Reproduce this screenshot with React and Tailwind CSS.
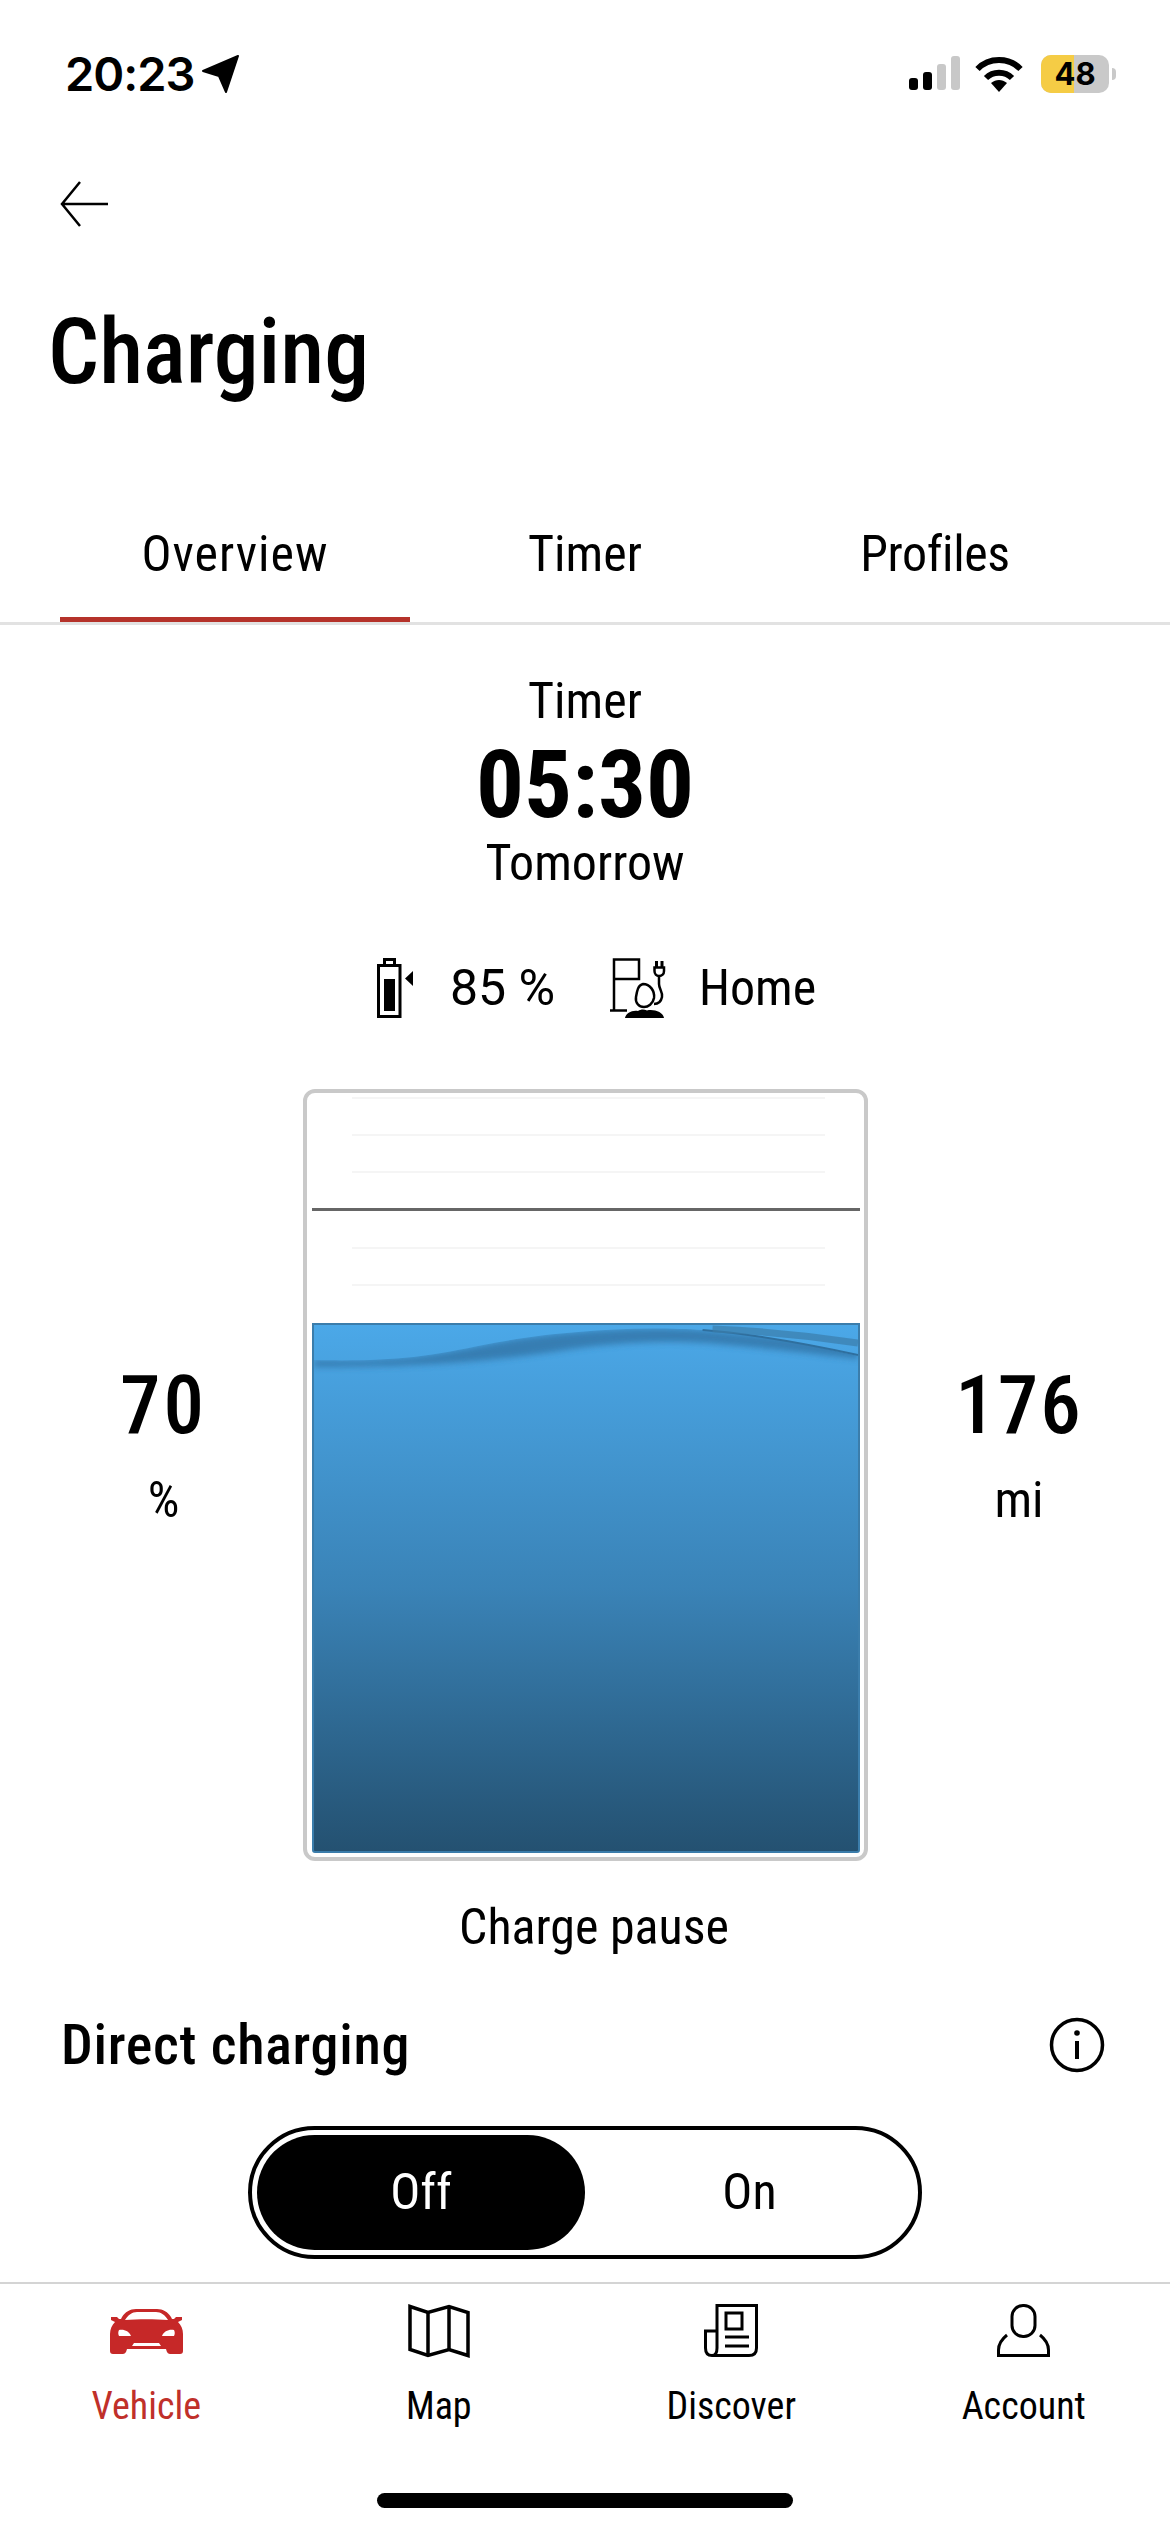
import { useId } from "react";

const font = "font-['Roboto',sans-serif] font-stretch-[75%]";

function Signal() {
    return (
        <svg width="52" height="36" viewBox="0 0 52 36">
            <rect x="0" y="22" width="9" height="12" rx="3" fill="#000" />
            <rect x="14" y="16" width="9" height="18" rx="3" fill="#000" />
            <rect x="28" y="8" width="9" height="26" rx="3" fill="#c8c8c8" />
            <rect x="42" y="0" width="9" height="34" rx="3" fill="#c8c8c8" />
        </svg>
    );
}

function Wifi() {
    return (
        <svg width="48" height="38" viewBox="0 0 48 38" fill="none" stroke="#000" strokeWidth="6">
            <path d="M2.5 14 C14 2 34 2 45.5 14" />
            <path d="M11 23 C18 16 30 16 37 23" />
            <path d="M16 28 L24 37 L32 28 C27 24 21 24 16 28 Z" fill="#000" stroke="none" />
        </svg>
    );
}

function BatteryStatus() {
    return (
        <div className="ml-[4px] flex items-center gap-[3px]">
            <div className="relative w-[68px] h-[38px] rounded-[10px] overflow-hidden bg-[#c9c9c9]">
                <div className="h-full w-[48%] bg-[#f5cc45]" />
                <span className="absolute inset-0 flex items-center justify-center text-[31px] font-bold text-black">48</span>
            </div>
            <div className="w-[4px] h-[12px] rounded-r-full bg-[#c9c9c9]" />
        </div>
    );
}

function ChargeTargetIcon() {
    return (
        <svg width="37" height="60" viewBox="0 0 37 60" fill="none" stroke="#000" strokeWidth="3">
            <rect x="7.5" y="1.5" width="10" height="6" />
            <rect x="1.5" y="7.5" width="21.5" height="51" />
            <rect x="7" y="21" width="11" height="32" fill="#000" stroke="none" />
            <path d="M36 13 L28 20.5 L36 28 Z" fill="#000" stroke="none" />
        </svg>
    );
}

function HomeChargerIcon() {
    return (
        <svg width="58" height="60" viewBox="0 0 58 60" fill="none" stroke="#000" strokeWidth="2.5">
            <path d="M4 53 V1.5 H29 V21 H4" />
            <path d="M0 52.5 H17" />
            <path d="M15 60 C16 55 22 52 28 53 C31 51 34 51 37 52.5 C44 51 53 54 54 60 Z" fill="#000" stroke="none" />
            <path d="M33 26 C40 26 45 33 44 40 C43 46 38 49 34 49 C29 49 25 45 26 39 C27 33 28 27 33 26 Z" />
            <path d="M49 18 V26 C49 31 53 34 52 39 C51 44 48 46 44 46" />
            <path d="M44.5 9.5 H54 V13 C54 16 52 18 49 18 C46.5 18 44.5 16 44.5 13 Z" />
            <path d="M46.5 3 V9 M52 3 V9" strokeWidth="3" />
        </svg>
    );
}

function CarIcon() {
    return (
        <svg width="73" height="45" viewBox="0 0 73 45">
            <path
                fill="#c62828"
                fillRule="evenodd"
                d="M12 8 C15 3 20 0 26 0 H47 C53 0 58 3 61 8 L62 10 H64 L66 8 H72 V11 L68 13 C71 16 73 20 73 25 V42 C73 44 72 45 70 45 H61 C58 45 57 44 56 40 H17 C16 44 15 45 12 45 H3 C1 45 0 44 0 42 V25 C0 20 2 16 5 13 L1 11 V8 H7 L9 10 H11 Z M15 11 C18 6 22 3 27 3 H46 C51 3 55 6 58 11 C45 10 28 10 15 11 Z M9 21 C14 20 19 22 21 27 H9 C8 25 8 23 9 21 Z M64 21 C59 20 54 22 52 27 H64 C65 25 65 23 64 21 Z M24 34 H49 L51 37 H22 Z"
            />
        </svg>
    );
}

function MapIcon() {
    return (
        <svg width="62" height="54" viewBox="0 0 62 54" fill="none" stroke="#000" strokeWidth="3.5">
            <path d="M2 2.5 L20 8.5 L41 2.5 L60 8.5 V51.5 L41 45.5 L20 51.5 L2 45.5 Z" />
            <path d="M20 8.5 V51.5 M41 2.5 V45.5" />
        </svg>
    );
}

function NewsIcon() {
    return (
        <svg width="54" height="54" viewBox="0 0 54 54" fill="none" stroke="#000" strokeWidth="3">
            <path d="M13 42 V1.5 H52.5 V44 C52.5 49 50 51.5 45 51.5 H8 C4 51.5 1.5 49 1.5 44 V27 H13 V44 C13 49 11 51.5 8 51.5" />
            <rect x="22" y="9" width="16" height="16" />
            <path d="M21 33 H45 M21 42 H45" />
        </svg>
    );
}

function PersonIcon() {
    return (
        <svg width="54" height="54" viewBox="0 0 54 54" fill="none" stroke="#000" strokeWidth="3">
            <rect x="15" y="1.5" width="23" height="31" rx="11" />
            <path d="M10 31 C5 35 1.5 39 1.5 46 V51.5 H51.5 V46 C51.5 39 48 35 43 31" />
        </svg>
    );
}

function InfoIcon() {
    return (
        <svg width="56" height="56" viewBox="0 0 56 56" fill="none" stroke="#000">
            <circle cx="28" cy="28" r="25.5" strokeWidth="3.5" />
            <path d="M28 24 V42" strokeWidth="4" />
            <circle cx="28" cy="16" r="2.8" fill="#000" stroke="none" />
        </svg>
    );
}

function NavItem({ icon, label, active }) {
    return (
        <div className={`flex flex-col items-center ${active ? "text-[#c0302a]" : "text-black"}`}>
            <div className="h-[54px] flex items-center">{icon}</div>
            <span className="mt-[25px] text-[38px] leading-[46px]">{label}</span>
        </div>
    );
}

function Wave() {
    const id = useId();
    const crest = "M0 35 C40 36 70 35 100 32 C125 29 150 24 170 20 C200 14 235 9 265 7 C290 5 315 3.5 340 3.5 C360 3.5 375 4 390 5";
    return (
        <svg className="absolute left-0 top-0 w-full h-[70px]" viewBox="0 0 546 70" preserveAspectRatio="none" fill="none">
            <defs>
                <clipPath id={`${id}-under`}>
                    <path d={`${crest} C430 8 490 18 546 31 V70 H0 Z`} />
                </clipPath>
                <filter id={`${id}-soft`} x="-10%" y="-50%" width="120%" height="200%">
                    <feGaussianBlur stdDeviation="3" />
                </filter>
            </defs>
            <g clipPath={`url(#${id}-under)`}>
                <path
                    d={`${crest} L546 20 V34 C480 26 430 21 390 18 C340 15 290 19 240 27 C190 34 130 42 0 42 Z`}
                    fill="#3073a6"
                    opacity="0.8"
                    filter={`url(#${id}-soft)`}
                />
            </g>
            <path d="M390 5 C430 8 490 18 546 30" stroke="#2f6f9e" strokeWidth="2" />
            <path d="M400 4 C450 6 500 11 546 18" stroke="#3b7dab" strokeWidth="7" opacity="0.7" />
        </svg>
    );
}

function ChargeGauge() {
    return (
        <div className="w-[565px] h-[772px] border-[4px] border-[#c9c9c9] rounded-[12px] pt-[4px] pr-[4px] pb-[4px] pl-[5px] flex flex-col">
            <div className="h-[226px] flex flex-col gap-[35px] bg-white">
                <div className="h-[2px] ml-[40px] mr-[35px] bg-[#f5f5f5]" />
                <div className="h-[2px] ml-[40px] mr-[35px] bg-[#f5f5f5]" />
                <div className="h-[2px] ml-[40px] mr-[35px] bg-[#f5f5f5]" />
                <div className="h-[3px] mb-[1px] bg-[#666666]" />
                <div className="h-[2px] ml-[40px] mr-[35px] bg-[#f5f5f5]" />
                <div className="h-[2px] ml-[40px] mr-[35px] bg-[#f5f5f5]" />
            </div>
            <div className="relative flex-1 border-[2px] border-[#3b7dab] rounded-b-[3px] bg-gradient-to-b from-[#4ba8e8] via-[#3a83b7] to-[#245171]">
                <Wave />
            </div>
        </div>
    );
}

export default function App() {
    return (
        <div className={`w-[1170px] h-[2532px] bg-white text-black overflow-hidden flex flex-col ${font}`}>
            {/* status bar */}
            <div className="h-[148px] flex items-center justify-between pl-[65px] pr-[54px] font-['Inter',sans-serif] font-stretch-[100%]">
                <div className="flex items-center gap-[8px]">
                    <span className="text-[47px] font-semibold tracking-[-1px]">20:23</span>
                    <svg width="38" height="38" viewBox="0 0 38 38">
                        <path d="M36 1 L24 37 L17 21 L1 16 Z" fill="#000" stroke="#000" strokeWidth="2" strokeLinejoin="round" />
                    </svg>
                </div>
                <div className="flex items-center gap-[14px]">
                    <Signal />
                    <Wifi />
                    <BatteryStatus />
                </div>
            </div>

            {/* back arrow */}
            <div className="h-[112px] flex items-center pl-[60px]">
                <svg width="48" height="46" viewBox="0 0 48 46" fill="none" stroke="#000" strokeWidth="2.5">
                    <path d="M48 23 H2 M20 1 L2 23 L20 45" />
                </svg>
            </div>

            <h1 className="pl-[48px] h-[262px] text-[90px] leading-[186px] font-medium">Charging</h1>

            {/* tabs */}
            <div className="border-b-[3px] border-[#e2e2e2]">
                <div className="mx-[60px] grid grid-cols-3 text-center text-[50px] h-[100px]">
                    <div className="border-b-[5px] border-[#b5322a] leading-[64px] tracking-[1px]">Overview</div>
                    <div className="leading-[64px]">Timer</div>
                    <div className="leading-[64px] tracking-[-0.4px]">Profiles</div>
                </div>
            </div>

            {/* next charge */}
            <div className="mt-[36px] flex flex-col items-center">
                <span className="text-[50px] leading-[80px]">Timer</span>
                <span className="text-[95px] leading-[88px] font-bold">05:30</span>
                <span className="text-[50px] leading-[68px]">Tomorrow</span>
            </div>

            <div className="mt-[61px] h-[60px] flex items-center pl-[377px] text-[50px]">
                <ChargeTargetIcon />
                <span className="ml-[36px] w-[160px] font-stretch-[100%]">85 %</span>
                <HomeChargerIcon />
                <span className="ml-[31px]">Home</span>
            </div>

            {/* gauge with values either side */}
            <div className="mt-[71px] flex items-start">
                <div className="w-[303px] pl-[24px] pt-[271px] flex flex-col items-center">
                    <span className="text-[81px] leading-[92px] font-medium tracking-[3px]">70</span>
                    <span className="mt-[18px] text-[50px] leading-[60px]">%</span>
                </div>
                <ChargeGauge />
                <div className="flex-1 pt-[271px] flex flex-col items-center">
                    <span className="text-[81px] leading-[92px] font-medium tracking-[2px]">176</span>
                    <span className="mt-[18px] text-[50px] leading-[60px]">mi</span>
                </div>
            </div>

            <div className="mt-[35px] pl-[18px] text-center text-[50px] leading-[62px]">Charge pause</div>

            <div className="mt-[52px] pl-[61px] pr-[65px] flex items-center justify-between">
                <span className="text-[56px] leading-[70px] font-medium tracking-[0.7px]">Direct charging</span>
                <InfoIcon />
            </div>

            {/* toggle */}
            <div className="mt-[46px] flex justify-center">
                <div className="w-[674px] h-[133px] border-[4px] border-black rounded-full p-[5px] pr-0 flex text-[50px]">
                    <div className="w-[328px] bg-black text-white rounded-full flex items-center justify-center">Off</div>
                    <div className="flex-1 pr-[4px] flex items-center justify-center">On</div>
                </div>
            </div>

            {/* bottom nav */}
            <div className="mt-[23px] border-t-[2px] border-[#d4d4d4] pt-[20px] grid grid-cols-4">
                <NavItem icon={<CarIcon />} label="Vehicle" active />
                <NavItem icon={<MapIcon />} label="Map" />
                <NavItem icon={<NewsIcon />} label="Discover" />
                <NavItem icon={<PersonIcon />} label="Account" />
            </div>

            <div className="mt-[64px] mx-auto w-[416px] h-[15px] rounded-full bg-black" />
        </div>
    );
}
